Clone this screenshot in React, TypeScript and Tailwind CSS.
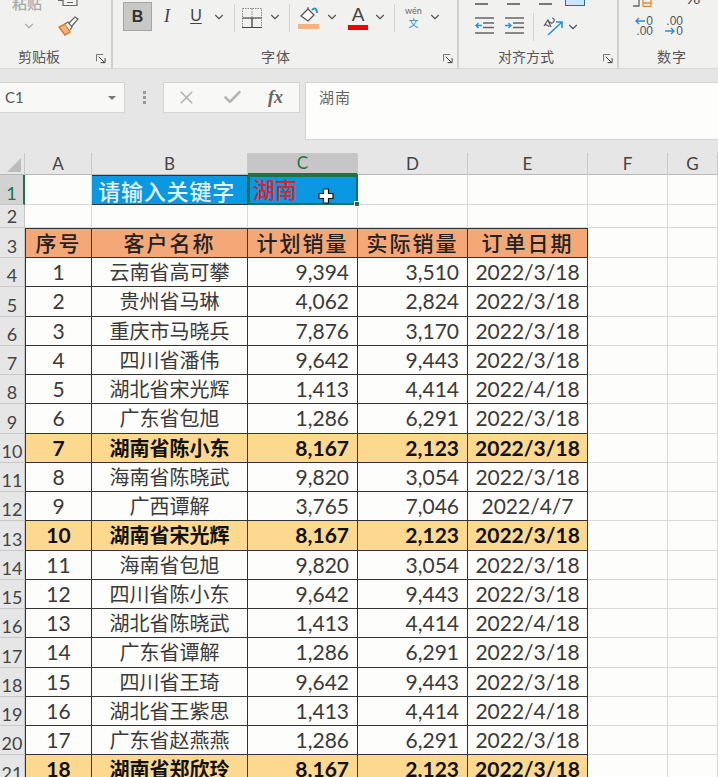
import { ChevronDown, Check, X } from "lucide-react";

const gridCols = "grid grid-cols-[25px_67px_156px_110px_110px_120px_80px_50px]";

const rows = [
  ["1", "云南省高可攀", "9,394", "3,510", "2022/3/18"],
  ["2", "贵州省马琳", "4,062", "2,824", "2022/3/18"],
  ["3", "重庆市马晓兵", "7,876", "3,170", "2022/3/18"],
  ["4", "四川省潘伟", "9,642", "9,443", "2022/3/18"],
  ["5", "湖北省宋光辉", "1,413", "4,414", "2022/4/18"],
  ["6", "广东省包旭", "1,286", "6,291", "2022/3/18"],
  ["7", "湖南省陈小东", "8,167", "2,123", "2022/3/18"],
  ["8", "海南省陈晓武", "9,820", "3,054", "2022/3/18"],
  ["9", "广西谭解", "3,765", "7,046", "2022/4/7"],
  ["10", "湖南省宋光辉", "8,167", "2,123", "2022/3/18"],
  ["11", "海南省包旭", "9,820", "3,054", "2022/3/18"],
  ["12", "四川省陈小东", "9,642", "9,443", "2022/3/18"],
  ["13", "湖北省陈晓武", "1,413", "4,414", "2022/4/18"],
  ["14", "广东省谭解", "1,286", "6,291", "2022/3/18"],
  ["15", "四川省王琦", "9,642", "9,443", "2022/3/18"],
  ["16", "湖北省王紫思", "1,413", "4,414", "2022/4/18"],
  ["17", "广东省赵燕燕", "1,286", "6,291", "2022/3/18"],
  ["18", "湖南省郑欣玲", "8,167", "2,123", "2022/3/18"],
];

function Chevron({ className }: { className: string }) {
  return <ChevronDown className={`h-3.5 w-3.5 shrink-0 text-[#555] ${className}`} strokeWidth={2} />;
}

function Launcher({ className }: { className: string }) {
  return (
    <svg viewBox="0 0 11 11" className={`h-[10px] w-[10px] shrink-0 ${className}`} fill="none" stroke="#666">
      <path d="M.5 8V.5H8" />
      <path d="M3 3l6 6M5 9.5h5V4.5" stroke="#2f2f2f" />
    </svg>
  );
}

function Divider({ className }: { className: string }) {
  return <div className={`h-[28px] w-px shrink-0 bg-[#d2d2d0] ${className}`} />;
}

function GroupLabel({ text, className }: { text: string; className: string }) {
  return <span className={`text-[14px] leading-[16px] text-[#555] ${className}`}>{text}</span>;
}

function LinesIcon({ arrow }: { arrow: "left" | "right" }) {
  return (
    <svg viewBox="0 0 19 18" className="h-[18px] w-[19px] shrink-0" fill="none">
      <path d="M0 1h19M8 6h11M8 10.500h11M0 16h19" stroke="#666" strokeWidth="1.300" />
      {arrow === "left" ? (
        <path d="M7 8.500H1M3.500 6L1 8.500 3.500 11" stroke="#2b8fd0" strokeWidth="1.400" />
      ) : (
        <path d="M0 8.500h6M3.500 6L6 8.500 3.500 11" stroke="#2b8fd0" strokeWidth="1.400" />
      )}
    </svg>
  );
}

function Ribbon() {
  return (
    <div className="flex h-[69px] items-stretch overflow-hidden border-b border-[#d8d8d6] bg-[#f1f1ef]">
      {/* clipboard */}
      <div className="flex w-[113px] shrink-0 flex-col border-r-2 border-[#d0d0ce]">
        <div className="flex h-[49px] pl-[12px]">
          <div className="flex w-[46px] flex-col">
            <span className="mt-[-6px] text-[15px] leading-[18px] font-medium text-[#aaa]">粘贴</span>
            <Chevron className="mt-[7px] ml-[10px] text-[#aaa]" />
          </div>
          <div className="flex flex-col">
            <svg viewBox="0 0 20 6" className="h-[6px] w-[20px]" fill="none" stroke="#666" strokeWidth="1.200">
              <path d="M0 .5h5M5 0v5.500h14V0M9 2.500h6" />
            </svg>
            <svg viewBox="0 0 21 20" className="mt-[10px] h-[20px] w-[21px]" fill="none">
              <path d="M1 11l6 8 5-3 -5-8z" fill="#f4b183" stroke="#e07b20" strokeWidth="1.400" />
              <path d="M7 8l3-2 4 5-2 3M11 7l6-6 3 2-6 7" fill="#fff" stroke="#666" strokeWidth="1.300" />
            </svg>
          </div>
        </div>
        <div className="flex items-center justify-between pr-[5px] pl-[18px]">
          <GroupLabel text="剪贴板" className="" />
          <Launcher className="mt-[3px]" />
        </div>
      </div>

      {/* font */}
      <div className="flex w-[346px] shrink-0 flex-col border-r-2 border-[#d0d0ce]">
        <div className="flex h-[49px] items-start pt-[2px] pl-[10px]">
          <div className="flex h-[29px] w-[29px] items-center justify-center border border-[#a5a5a5] bg-[#c8c8c6] font-['Liberation_Sans',sans-serif] text-[16px] font-bold text-[#333]">
            B
          </div>
          <span className="mt-[3px] ml-[8px] w-[14px] text-center font-['Liberation_Serif',serif] text-[18px] leading-[22px] text-[#444] italic">
            I
          </span>
          <span className="mt-[3px] ml-[15px] w-[14px] text-center font-['Liberation_Sans',sans-serif] text-[16px] leading-[22px] text-[#444] underline underline-offset-2">
            U
          </span>
          <Chevron className="mt-[8px] ml-[9px]" />
          <Divider className="ml-[8px] mt-[2px]" />
          <svg viewBox="0 0 20 20" className="mt-[6px] ml-[7px] h-[20px] w-[20px]" fill="none">
            <path d="M.5.500h19v19H.5zM10 .500v19M.5 10h19" stroke="#888" strokeDasharray="1.500 1" />
            <path d="M10 10v9.500M.5 10h19M0 19.500h20" stroke="#444" strokeWidth="1.200" />
          </svg>
          <Chevron className="mt-[8px] ml-[6px]" />
          <Divider className="ml-[7px] mt-[2px]" />
          <div className="mt-[5px] ml-[8px] flex w-[21px] flex-col">
            <svg viewBox="0 0 21 17" className="h-[17px] w-[21px]" fill="none">
              <path d="M3 9l7-7 6 6-6 6z" fill="#fff" stroke="#555" strokeWidth="1.300" />
              <path d="M10 2V0" stroke="#555" />
              <path d="M14 3c3-3 5-1 5 3" stroke="#2b8fd0" strokeWidth="2" />
            </svg>
            <div className="h-[5px] bg-[#f4b183]" />
          </div>
          <Chevron className="mt-[8px] ml-[6px]" />
          <div className="mt-[2px] ml-[9px] flex w-[20px] flex-col items-center">
            <span className="font-['Liberation_Sans',sans-serif] text-[19px] leading-[21px] text-[#444]">A</span>
            <div className="h-[5px] w-full bg-[#f00000]" />
          </div>
          <Chevron className="mt-[8px] ml-[5px]" />
          <Divider className="ml-[7px] mt-[2px]" />
          <div className="mt-[3px] ml-[9px] flex w-[19px] flex-col items-center">
            <span className="text-[9px] leading-[12px] text-[#666]">wén</span>
            <span className="text-[10px] leading-[12px] text-[#2b8fd0]">文</span>
          </div>
          <Chevron className="mt-[8px] ml-[5px]" />
        </div>
        <div className="flex items-center pr-[4px] pl-[148px]">
          <GroupLabel text="字体" className="flex-1 tracking-[1px]" />
          <Launcher className="mt-[3px]" />
        </div>
      </div>

      {/* alignment */}
      <div className="flex w-[160px] shrink-0 flex-col border-r-2 border-[#d0d0ce]">
        <div className="flex h-[49px] flex-col pl-[16px]">
          <div className="flex h-[17px] items-start gap-[19px]">
            <div className="mt-[3px] h-[2px] w-[13px] bg-[#777]" />
            <div className="mt-[3px] h-[2px] w-[13px] bg-[#777]" />
            <div className="mt-[3px] h-[2px] w-[13px] bg-[#777]" />
            <div className="ml-[-6px] h-[6px] w-[20px] border border-t-0 border-[#2b6f9f] bg-[#cfe3f2]" />
          </div>
          <div className="flex items-start">
            <LinesIcon arrow="left" />
            <div className="ml-[11px]">
              <LinesIcon arrow="right" />
            </div>
            <Divider className="mt-[-4px] ml-[9px]" />
            <svg viewBox="0 0 22 20" className="ml-[8px] h-[20px] w-[22px] shrink-0" fill="none">
              <path d="M2 9l4-6 3 7M3.500 7.500l4 2M10 1c2 0 3 2 1.500 4s-3 1-4-.5" stroke="#555" strokeWidth="1.200" />
              <path d="M6 18L20 5M14 5h6v6" stroke="#2b8fd0" strokeWidth="1.600" />
            </svg>
            <Chevron className="mt-[3px] ml-[2px]" />
          </div>
        </div>
        <div className="flex items-center pr-[4px] pl-[39px]">
          <GroupLabel text="对齐方式" className="flex-1" />
          <Launcher className="mt-[3px]" />
        </div>
      </div>

      {/* number */}
      <div className="flex min-w-0 flex-1 flex-col">
        <div className="flex h-[49px] flex-col pl-[14px]">
          <div className="flex h-[16px] items-start">
            <svg viewBox="0 0 20 7" className="h-[7px] w-[20px] shrink-0" fill="none">
              <path d="M0 6h6V0" stroke="#666" strokeWidth="1.300" />
              <path d="M10 0v5.500q0 1 1 1h6q1 0 1-1V0M10 3h8" stroke="#e08a2c" strokeWidth="1.300" />
            </svg>
            <span className="mt-[-13px] ml-[33px] font-['Lato',sans-serif] text-[18px] leading-[20px] text-[#555]">%</span>
          </div>
          <div className="flex gap-[10px] font-['Liberation_Sans',sans-serif] text-[12px] leading-[10px] text-[#555]">
            <div className="flex w-[20px] flex-col items-end">
              <div className="flex items-center gap-[1px]">
                <svg viewBox="0 0 10 8" className="h-[8px] w-[10px]" fill="none" stroke="#2b8fd0" strokeWidth="1.400">
                  <path d="M10 4H1M4 1L1 4l3 3" />
                </svg>
                <span>0</span>
              </div>
              <span>.00</span>
            </div>
            <div className="flex w-[20px] flex-col items-end">
              <span>.00</span>
              <div className="flex items-center gap-[1px]">
                <svg viewBox="0 0 10 8" className="h-[8px] w-[10px]" fill="none" stroke="#2b8fd0" strokeWidth="1.400">
                  <path d="M0 4h9M6 1l3 3-3 3" />
                </svg>
                <span>0</span>
              </div>
            </div>
          </div>
        </div>
        <GroupLabel text="数字" className="pl-[38px] tracking-[1px]" />
      </div>
    </div>
  );
}

function FormulaBar() {
  return (
    <div className="flex h-[84px] items-start bg-[#e6e6e6] pt-[13px]">
      <div className="flex h-[31px] w-[125px] shrink-0 items-center justify-between border border-l-0 border-[#d4d4d4] bg-[#f8f8f6] pr-[8px] pl-[5px] text-[15px] text-[#555]">
        C1
        <div className="h-0 w-0 border-x-[4px] border-t-[4px] border-x-transparent border-t-[#777]" />
      </div>
      <div className="ml-[18px] flex h-[31px] w-[3px] shrink-0 flex-col items-center justify-center gap-[2px]">
        <div className="h-[3px] w-[3px] bg-[#999]" />
        <div className="h-[3px] w-[3px] bg-[#999]" />
        <div className="h-[3px] w-[3px] bg-[#999]" />
      </div>
      <div className="ml-[17px] flex h-[31px] w-[137px] shrink-0 items-center border border-[#d4d4d4] bg-[#f8f8f6] pl-[12px] text-[#b5b5b5]">
        <X className="h-[21px] w-[21px]" strokeWidth={2} />
        <Check className="ml-[25px] h-[21px] w-[21px]" strokeWidth={3} />
        <span className="ml-[25px] font-['Liberation_Serif',serif] text-[18px] font-bold text-[#666] italic">fx</span>
      </div>
      <div className="ml-[5px] h-[58px] min-w-0 flex-1 border border-r-0 border-[#d4d4d4] bg-[#fdfdfb] pt-[3px] pl-[13px] text-[15px] tracking-[1px] text-[#666]">
        湖南
      </div>
    </div>
  );
}

function ColumnHeaders() {
  const letters = ["A", "B", "C", "D", "E", "F", "G"];
  return (
    <div className={`${gridCols} h-[22px] border-b border-[#b8b8b8] bg-[#e6e6e6]`}>
      <div className="relative border-r border-[#c8c8c8]">
        <div className="absolute right-[3px] bottom-[3px] h-0 w-0 border-b-[14px] border-l-[14px] border-b-[#bcbcbc] border-l-transparent" />
      </div>
      {letters.map((letter) => (
        <div
          key={letter}
          className={`flex items-center justify-center border-r border-[#c8c8c8] text-[17px] leading-[20px] ${
            letter === "C" ? "border-b-2 border-b-[#217346] bg-[#c6c6c6] text-[#217346]" : "text-[#444]"
          }`}
        >
          {letter}
        </div>
      ))}
    </div>
  );
}

function RowHeader({ label, active }: { label: string; active?: boolean }) {
  return (
    <div
      className={`flex items-end justify-center overflow-hidden border-b border-[#c8c8c8] text-[18px] leading-[22px] ${
        active ? "border-r-2 border-r-[#217346] bg-[#d2d2d2] text-[#217346]" : "border-r border-r-[#c8c8c8] bg-[#e6e6e6] text-[#444]"
      }`}
    >
      {label}
    </div>
  );
}

function Blank() {
  return <div className="border-r border-b border-[#d9d9d9] bg-[#fdfdfb]" />;
}

function Sheet() {
  const headers = ["序号", "客户名称", "计划销量", "实际销量", "订单日期"];
  return (
    <div className="relative">
      <ColumnHeaders />

      <div className={`${gridCols} h-[30px] grid-rows-[30px]`}>
        <RowHeader label="1" active />
        <Blank />
        <div className="flex items-center justify-end border-y border-r border-[#333] bg-[#0a98e2] pt-[3px] pr-[12px] text-[22px] leading-[26px] font-medium tracking-[0.800px] text-[#e4f4fc]">
          请输入关键字
        </div>
        <div className="relative flex items-center border-2 border-[#217346] bg-[#0a98e2] pl-[3px] text-[22px] leading-[24px] font-medium text-[#e0202a]">
          湖南
          <div className="absolute -right-[4px] -bottom-[4px] h-[6px] w-[6px] border border-white bg-[#217346]" />
          <svg viewBox="0 0 16 16" className="absolute top-[11px] left-[68px] h-[16px] w-[16px]">
            <path d="M5.500 1h5v4.500H15v5h-4.500V15h-5v-4.500H1v-5h4.500z" fill="#fff" stroke="#111" strokeWidth="1.200" />
          </svg>
        </div>
        <Blank />
        <Blank />
        <Blank />
        <Blank />
      </div>

      <div className={`${gridCols} h-[23px] grid-rows-[23px]`}>
        <RowHeader label="2" />
        {[0, 1, 2, 3, 4, 5, 6].map((i) => (
          <Blank key={i} />
        ))}
      </div>

      <div className={`${gridCols} h-[30px] grid-rows-[30px]`}>
        <RowHeader label="3" />
        {headers.map((header, i) => (
          <div
            key={header}
            className={`flex items-center justify-center border-y border-r border-[#333] bg-[#f4a878] text-[21px] leading-[28px] font-medium tracking-[2px] text-[#222] ${
              i === 0 ? "border-l" : ""
            }`}
          >
            {header}
          </div>
        ))}
        <Blank />
        <Blank />
      </div>

      {rows.map(([no, name, plan, actual, date], index) => {
        const hit = name.startsWith("湖南");
        const cell = `flex items-center border-r border-b border-[#333] leading-[28px] ${
          hit ? "bg-[#fdd98f] font-bold text-[#111]" : "bg-[#fdfdfb] text-[#3a3a3a]"
        }`;
        return (
          <div key={no} className={`${gridCols} h-[29.25px] grid-rows-[29.25px]`}>
            <RowHeader label={String(index + 4)} />
            <div className={`${cell} justify-center border-l text-[21px]`}>{no}</div>
            <div className={`${cell} justify-center text-[20px]`}>{name}</div>
            <div className={`${cell} justify-end pr-[8px] text-[21px]`}>{plan}</div>
            <div className={`${cell} justify-end pr-[8px] text-[21px]`}>{actual}</div>
            <div className={`${cell} justify-center text-[21px]`}>{date}</div>
            <Blank />
            <Blank />
          </div>
        );
      })}
    </div>
  );
}

export default function App() {
  return (
    <div className="h-[777px] w-[718px] overflow-hidden bg-[#e6e6e6] font-['Lato','Noto_Sans_CJK_SC',sans-serif]">
      <Ribbon />
      <FormulaBar />
      <Sheet />
    </div>
  );
}
